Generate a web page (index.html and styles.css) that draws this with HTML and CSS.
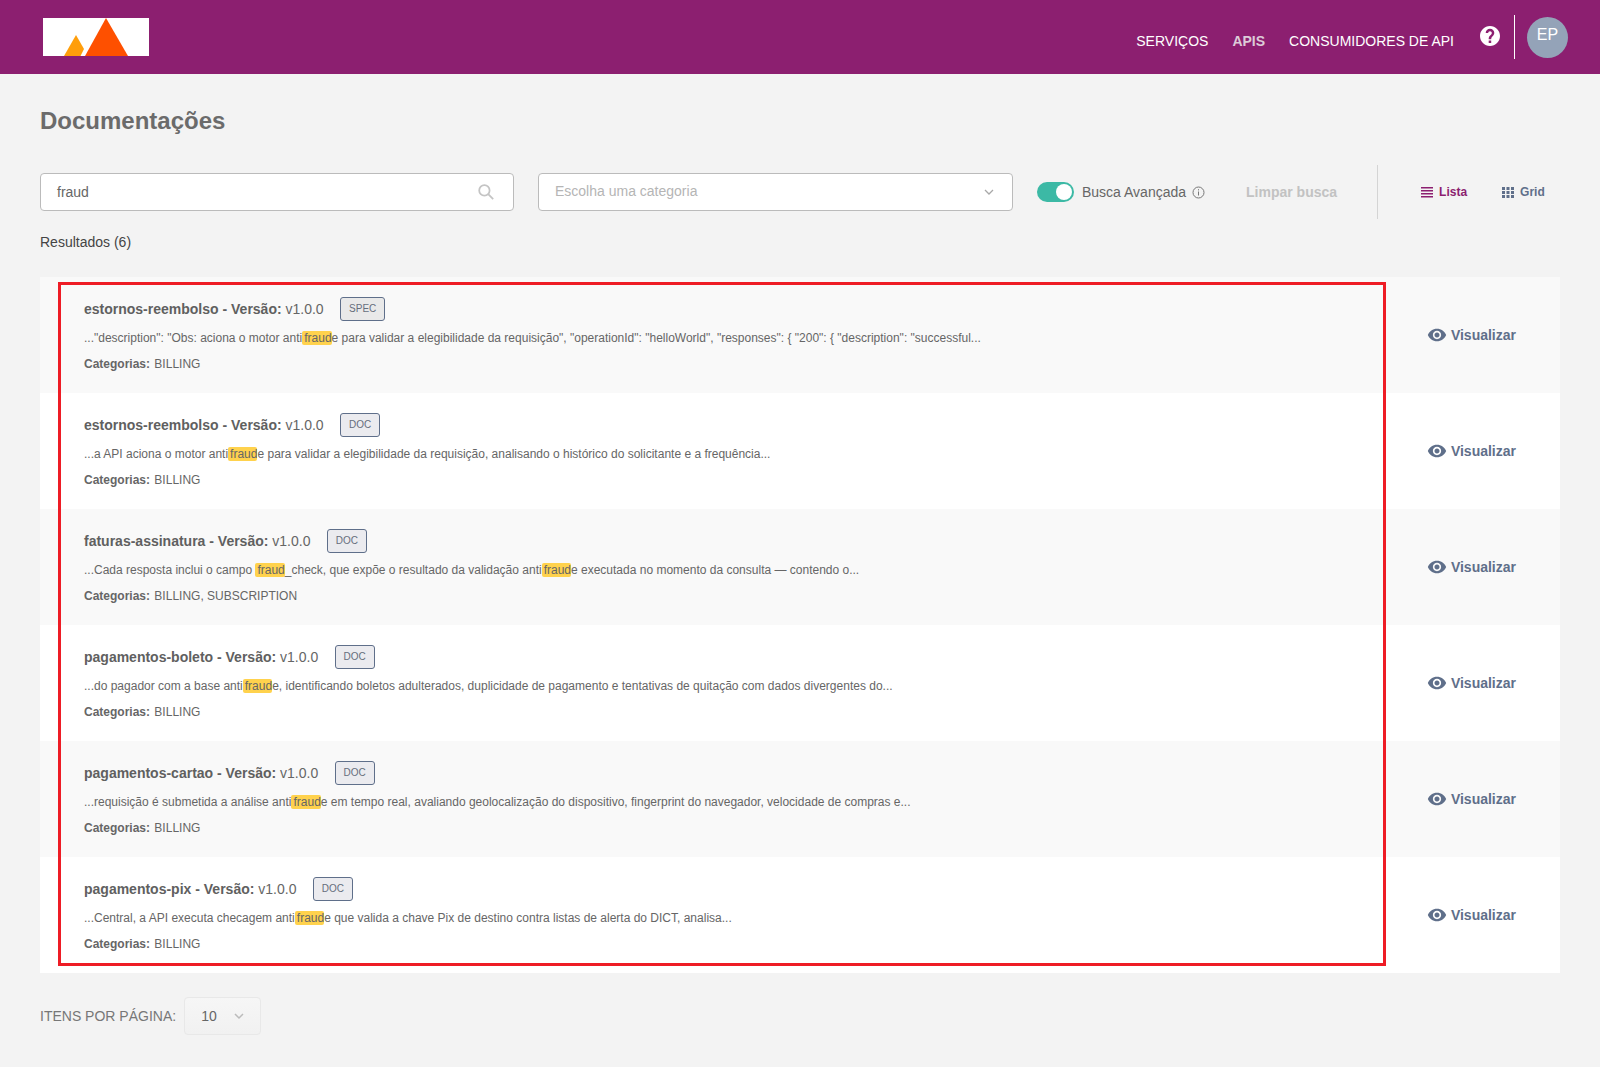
FILE: index.html
```html
<!DOCTYPE html>
<html lang="pt-BR">
<head>
    <meta charset="UTF-8">
    <meta name="viewport" content="width=device-width, initial-scale=1.0">
    <title>Documentações</title>
    <link rel="stylesheet" href="styles.css">
</head>
<body>

<header class="topbar">
    <div class="logo">
        <svg width="106" height="38" viewBox="0 0 106 38">
            <rect width="106" height="38" fill="#fff"/>
            <path d="M21 38L33 17 41 31 37.500 38z" fill="#ff9e0b"/>
            <path d="M42 38L63 0 85 38z" fill="#fe5000"/>
        </svg>
    </div>
    <nav class="nav">
        <a class="nav-link">SERVIÇOS</a>
        <a class="nav-link active">APIS</a>
        <a class="nav-link">CONSUMIDORES DE API</a>
    </nav>
    <svg class="help" width="24" height="24" viewBox="0 0 24 24"><path fill="#fff" d="M12 2C6.480 2 2 6.480 2 12s4.480 10 10 10 10-4.480 10-10S17.520 2 12 2zm1.200 17h-2.500v-2.400h2.500V19zm2.100-7.500l-.9.900c-.8.800-1.200 1.400-1.200 2.800h-2.500v-.6c0-1.200.5-2.200 1.200-2.900l1.300-1.300c.4-.4.600-.8.600-1.400 0-1-.8-1.800-1.800-1.800s-1.800.8-1.800 1.800H7.700c0-2.400 1.900-4.300 4.300-4.300s4.300 1.900 4.300 4.300c0 1-.4 1.800-1 2.400z"/></svg>
    <div class="top-divider"></div>
    <div class="avatar">EP</div>
</header>

<main class="page">
    <h1 class="title">Documentações</h1>

    <div class="filters">
        <div class="field search">
            <span>fraud</span>
            <svg width="16" height="16" viewBox="0 0 20 20" fill="none" stroke="#c4c4c4" stroke-width="2.200"><circle cx="8" cy="8" r="6.500"/><path d="M12.700 12.700L19 19"/></svg>
        </div>
        <div class="field category">
            <span class="placeholder">Escolha uma categoria</span>
            <svg width="10" height="7" viewBox="0 0 10 7" fill="none" stroke="#a8a8a8" stroke-width="1.300"><path d="M1 1l4 4 4-4"/></svg>
        </div>
        <div class="toggle"><div class="knob"></div></div>
        <span class="advanced">Busca Avançada</span>
        <svg class="info" width="13" height="13" viewBox="0 0 13 13" fill="none" stroke="#777"><circle cx="6.500" cy="6.500" r="5.500"/><path d="M6.500 5.500v4M6.500 3.200v1.200"/></svg>
        <span class="clear">Limpar busca</span>
        <div class="filter-divider"></div>
        <a class="view-btn selected">
            <svg width="12" height="11" viewBox="0 0 12 11" fill="#8c1f70"><path d="M0 0h12v1.500H0zM0 3h12v1.500H0zM0 6h12v1.500H0zM0 9h12v1.500H0z"/></svg>
            Lista
        </a>
        <a class="view-btn">
            <svg width="12" height="11" viewBox="0 0 12 11" fill="#5f6f8a"><path d="M0 0h3v3H0zM4.500 0h3v3h-3zM9 0h3v3H9zM0 4h3v3H0zM4.500 4h3v3h-3zM9 4h3v3H9zM0 8h3v3H0zM4.500 8h3v3h-3zM9 8h3v3H9z"/></svg>
            Grid
        </a>
    </div>

    <p class="count">Resultados (6)</p>

    <section class="results">
        <div class="row">
            <div class="row-main">
                <div class="row-title"><span><b>estornos-reembolso - Versão:</b> v1.0.0</span><span class="badge spec">SPEC</span></div>
                <p class="snippet">..."description": "Obs: aciona o motor anti<mark>fraud</mark>e para validar a elegibilidade da requisição", "operationId": "helloWorld", "responses": { "200": { "description": "successful...</p>
                <p class="cats"><b>Categorias:</b> BILLING</p>
            </div>
            <a class="view-link"><svg width="20" height="20" viewBox="0 0 24 24"><path fill="#5f6f8a" d="M12 4.500C7 4.500 2.730 7.610 1 12c1.730 4.390 6 7.500 11 7.500s9.270-3.110 11-7.500c-1.730-4.390-6-7.500-11-7.500zM12 17c-2.760 0-5-2.240-5-5s2.240-5 5-5 5 2.240 5 5-2.240 5-5 5zm0-8c-1.660 0-3 1.340-3 3s1.340 3 3 3 3-1.340 3-3-1.340-3-3-3z"/></svg>Visualizar</a>
        </div>
        <div class="row">
            <div class="row-main">
                <div class="row-title"><span><b>estornos-reembolso - Versão:</b> v1.0.0</span><span class="badge">DOC</span></div>
                <p class="snippet">...a API aciona o motor anti<mark>fraud</mark>e para validar a elegibilidade da requisição, analisando o histórico do solicitante e a frequência...</p>
                <p class="cats"><b>Categorias:</b> BILLING</p>
            </div>
            <a class="view-link"><svg width="20" height="20" viewBox="0 0 24 24"><path fill="#5f6f8a" d="M12 4.500C7 4.500 2.730 7.610 1 12c1.730 4.390 6 7.500 11 7.500s9.270-3.110 11-7.500c-1.730-4.390-6-7.500-11-7.500zM12 17c-2.760 0-5-2.240-5-5s2.240-5 5-5 5 2.240 5 5-2.240 5-5 5zm0-8c-1.660 0-3 1.340-3 3s1.340 3 3 3 3-1.340 3-3-1.340-3-3-3z"/></svg>Visualizar</a>
        </div>
        <div class="row">
            <div class="row-main">
                <div class="row-title"><span><b>faturas-assinatura - Versão:</b> v1.0.0</span><span class="badge">DOC</span></div>
                <p class="snippet">...Cada resposta inclui o campo <mark>fraud</mark>_check, que expõe o resultado da validação anti<mark>fraud</mark>e executada no momento da consulta — contendo o...</p>
                <p class="cats"><b>Categorias:</b> BILLING, SUBSCRIPTION</p>
            </div>
            <a class="view-link"><svg width="20" height="20" viewBox="0 0 24 24"><path fill="#5f6f8a" d="M12 4.500C7 4.500 2.730 7.610 1 12c1.730 4.390 6 7.500 11 7.500s9.270-3.110 11-7.500c-1.730-4.390-6-7.500-11-7.500zM12 17c-2.760 0-5-2.240-5-5s2.240-5 5-5 5 2.240 5 5-2.240 5-5 5zm0-8c-1.660 0-3 1.340-3 3s1.340 3 3 3 3-1.340 3-3-1.340-3-3-3z"/></svg>Visualizar</a>
        </div>
        <div class="row">
            <div class="row-main">
                <div class="row-title"><span><b>pagamentos-boleto - Versão:</b> v1.0.0</span><span class="badge">DOC</span></div>
                <p class="snippet">...do pagador com a base anti<mark>fraud</mark>e, identificando boletos adulterados, duplicidade de pagamento e tentativas de quitação com dados divergentes do...</p>
                <p class="cats"><b>Categorias:</b> BILLING</p>
            </div>
            <a class="view-link"><svg width="20" height="20" viewBox="0 0 24 24"><path fill="#5f6f8a" d="M12 4.500C7 4.500 2.730 7.610 1 12c1.730 4.390 6 7.500 11 7.500s9.270-3.110 11-7.500c-1.730-4.390-6-7.500-11-7.500zM12 17c-2.760 0-5-2.240-5-5s2.240-5 5-5 5 2.240 5 5-2.240 5-5 5zm0-8c-1.660 0-3 1.340-3 3s1.340 3 3 3 3-1.340 3-3-1.340-3-3-3z"/></svg>Visualizar</a>
        </div>
        <div class="row">
            <div class="row-main">
                <div class="row-title"><span><b>pagamentos-cartao - Versão:</b> v1.0.0</span><span class="badge">DOC</span></div>
                <p class="snippet">...requisição é submetida a análise anti<mark>fraud</mark>e em tempo real, avaliando geolocalização do dispositivo, fingerprint do navegador, velocidade de compras e...</p>
                <p class="cats"><b>Categorias:</b> BILLING</p>
            </div>
            <a class="view-link"><svg width="20" height="20" viewBox="0 0 24 24"><path fill="#5f6f8a" d="M12 4.500C7 4.500 2.730 7.610 1 12c1.730 4.390 6 7.500 11 7.500s9.270-3.110 11-7.500c-1.730-4.390-6-7.500-11-7.500zM12 17c-2.760 0-5-2.240-5-5s2.240-5 5-5 5 2.240 5 5-2.240 5-5 5zm0-8c-1.660 0-3 1.340-3 3s1.340 3 3 3 3-1.340 3-3-1.340-3-3-3z"/></svg>Visualizar</a>
        </div>
        <div class="row">
            <div class="row-main">
                <div class="row-title"><span><b>pagamentos-pix - Versão:</b> v1.0.0</span><span class="badge">DOC</span></div>
                <p class="snippet">...Central, a API executa checagem anti<mark>fraud</mark>e que valida a chave Pix de destino contra listas de alerta do DICT, analisa...</p>
                <p class="cats"><b>Categorias:</b> BILLING</p>
            </div>
            <a class="view-link"><svg width="20" height="20" viewBox="0 0 24 24"><path fill="#5f6f8a" d="M12 4.500C7 4.500 2.730 7.610 1 12c1.730 4.390 6 7.500 11 7.500s9.270-3.110 11-7.500c-1.730-4.390-6-7.500-11-7.500zM12 17c-2.760 0-5-2.240-5-5s2.240-5 5-5 5 2.240 5 5-2.240 5-5 5zm0-8c-1.660 0-3 1.340-3 3s1.340 3 3 3 3-1.340 3-3-1.340-3-3-3z"/></svg>Visualizar</a>
        </div>
        <div class="red-box"></div>
    </section>

    <div class="pager">
        <span>ITENS POR PÁGINA:</span>
        <div class="page-size">
            <span>10</span>
            <svg width="10" height="7" viewBox="0 0 10 7" fill="none" stroke="#bbb" stroke-width="1.500"><path d="M1 1l4 4 4-4"/></svg>
        </div>
    </div>
</main>

</body>
</html>
```

FILE: styles.css
```css
html {
    background: #fff;
}
body {
    margin: 0;
    height: 1067px;
    background: #f3f3f3;
    font-family: "Liberation Sans", Arial, sans-serif;
    color: #666;
}
p {
    margin: 0;
}

/* top bar */
.topbar {
    height: 74px;
    background: #8c1f70;
    display: flex;
    align-items: center;
    padding: 0 32px 0 43px;
    box-sizing: border-box;
}
.logo {
    height: 38px;
    margin-top: -1px;
}
.nav {
    margin-left: auto;
    display: flex;
    gap: 24px;
    font-size: 14px;
    color: #fff;
    margin-top: 7px;
}
.nav-link.active {
    font-weight: bold;
    color: #dccbd8;
}
.help {
    margin-left: 24px;
    margin-top: -3px;
}
.top-divider {
    width: 1px;
    height: 44px;
    background: #fff;
    margin-left: 12px;
}
.avatar {
    width: 41px;
    height: 41px;
    border-radius: 50%;
    background: #94a3b8;
    color: #fff;
    font-size: 16px;
    display: flex;
    align-items: center;
    justify-content: center;
    margin-left: 12px;
    padding-bottom: 4px;
    box-sizing: border-box;
}

/* page */
.page {
    padding: 0 40px;
}
.title {
    margin: 0;
    padding-top: 33px;
    font-size: 24px;
    line-height: 28px;
    color: #6b6b6b;
}
.filters {
    display: flex;
    align-items: center;
    height: 54px;
    margin-top: 30px;
}
.field {
    height: 38px;
    width: 474px;
    box-sizing: border-box;
    background: #fff;
    border: 1px solid #bbb;
    border-radius: 4px;
    display: flex;
    align-items: center;
    justify-content: space-between;
    padding: 0 19px 0 16px;
    font-size: 14px;
}
.search {
    margin-right: 24px;
}
.category {
    width: 475px;
    color: #b5b5b5;
    margin-right: 24px;
    padding-right: 18px;
}
.placeholder {
    margin-bottom: 2px;
}
.toggle {
    width: 37px;
    height: 20px;
    border-radius: 10px;
    background: #3cb9a5;
    position: relative;
}
.knob {
    position: absolute;
    right: 2px;
    top: 2px;
    width: 16px;
    height: 16px;
    border-radius: 50%;
    background: #fff;
}
.advanced {
    font-size: 14px;
    margin-left: 8px;
}
.info {
    margin-left: 6px;
}
.clear {
    font-size: 14px;
    font-weight: bold;
    color: #c2c2c2;
    margin-left: 41px;
}
.filter-divider {
    width: 1px;
    height: 54px;
    background: #d4d4d4;
    margin: 0 43px 0 40px;
}
.view-btn {
    display: flex;
    align-items: center;
    gap: 6px;
    font-size: 12px;
    font-weight: bold;
    color: #5f6f8a;
}
.view-btn.selected {
    color: #8c1f70;
    margin-right: 35px;
}
.count {
    font-size: 14px;
    color: #444;
    margin-top: 15px;
    line-height: 16px;
}

/* result list */
.results {
    position: relative;
    margin-top: 27px;
    width: 1520px;
}
.row {
    height: 116px;
    background: #fff;
    display: flex;
    align-items: center;
    justify-content: space-between;
}
.row:nth-child(odd) {
    background: #f9f9f9;
}
.row-main {
    padding: 20px 0 0 44px;
    align-self: flex-start;
}
.row-title {
    display: flex;
    align-items: center;
    gap: 16.400px;
    font-size: 14px;
    height: 24px;
    color: #666;
}
.row-title b {
    color: #606060;
}
.badge {
    height: 24px;
    box-sizing: border-box;
    padding: 0 8px;
    border: 1px solid #5f6f8a;
    border-radius: 3px;
    background: #ebebef;
    font-size: 10px;
    line-height: 22px;
    color: #666e7c;
}
.badge.spec {
    background: #e9e9e9;
}
.snippet {
    font-size: 12px;
    line-height: 14px;
    margin-top: 10px;
}
mark {
    background: #ffd24d;
    color: #666;
    border-radius: 2px;
    padding: 0 0 0 2px;
}
.cats {
    font-size: 12px;
    line-height: 14px;
    margin-top: 12px;
}
.cats b {
    margin-right: 1px;
}
.view-link {
    display: flex;
    align-items: center;
    gap: 4px;
    font-size: 14px;
    font-weight: bold;
    color: #5f6f8a;
    margin-right: 44px;
}
.red-box {
    position: absolute;
    left: 18px;
    top: 5px;
    width: 1328px;
    height: 684px;
    box-sizing: border-box;
    border: 3px solid #ee1c25;
}

/* pagination */
.pager {
    display: flex;
    align-items: center;
    gap: 8px;
    font-size: 14px;
    color: #777;
    margin-top: 24px;
}
.page-size {
    width: 77px;
    height: 38px;
    box-sizing: border-box;
    border: 1px solid #e8e8e8;
    border-radius: 4px;
    background: linear-gradient(#f6f6f6, #f1f1f1);
    display: flex;
    align-items: center;
    gap: 17px;
    padding-left: 16px;
    color: #666;
}
```
